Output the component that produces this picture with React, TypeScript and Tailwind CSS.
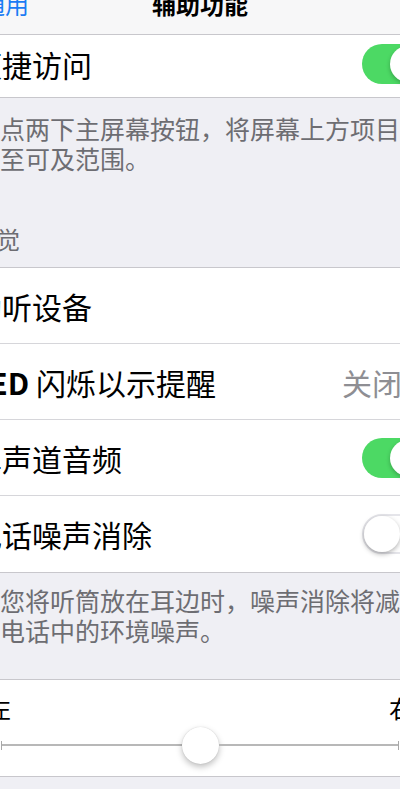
import React from "react";

function Toggle({ on }: { on: boolean }) {
  return on ? (
    <div className="flex h-[40px] w-[66px] shrink-0 items-center justify-end rounded-full bg-[#4cd964] p-[2px]">
      <div className="h-[36px] w-[36px] rounded-full bg-white shadow-[0_2px_4px_rgba(0,0,0,0.25)]" />
    </div>
  ) : (
    <div className="flex h-[40px] w-[66px] shrink-0 items-center justify-start rounded-full border-[2px] border-[#e5e5ea] bg-white">
      <div className="h-[36px] w-[36px] rounded-full bg-white shadow-[0_2px_5px_rgba(0,0,0,0.3)]" />
    </div>
  );
}

function Chevron() {
  return (
    <svg width="13" height="22" viewBox="0 0 13 22" className="shrink-0">
      <path d="M2 2 L11 11 L2 20" fill="none" stroke="#c7c7cc" strokeWidth="2.5" strokeLinecap="round" strokeLinejoin="round" />
    </svg>
  );
}

function Row({ children, right, last }: { children: React.ReactNode; right?: React.ReactNode; last?: boolean }) {
  return (
    <div className={"flex h-[76px] items-center justify-between px-[26px] bg-white " + (last ? "" : "border-b border-[#d6d6da]")}>
      <div className="text-[30px] leading-[36px] text-black whitespace-nowrap">{children}</div>
      {right}
    </div>
  );
}

export default function App() {
  return (
    <div className="h-[789px] w-[400px] overflow-hidden bg-[#efeff4] font-['Noto_Sans_CJK_SC','Noto_Sans',sans-serif]">
      <div className="ml-[-54px] w-[508px]">
        {/* Nav bar */}
        <div className="relative flex h-[35px] items-end border-b border-[#c8c7cc] bg-[#f7f7f8] pb-[18px]">
          <div className="flex items-center pl-[8px] text-[24px] leading-[24px] text-[#1b7cf4] whitespace-nowrap">
            <svg width="13" height="22" viewBox="0 0 13 22" className="shrink-0">
              <path d="M11 2 L2 11 L11 20" fill="none" stroke="#1b7cf4" strokeWidth="3" strokeLinecap="round" strokeLinejoin="round" />
            </svg>
            <span className="ml-[14px]">通用</span>
          </div>
          <div className="flex-1" />
          <div className="absolute bottom-[18px] left-0 right-0 text-center text-[24px] leading-[24px] font-bold text-black">
            辅助功能
          </div>
        </div>

        {/* Reachability row */}
        <div className="flex h-[63px] items-center justify-between border-b border-[#c8c7cc] bg-white px-[26px] pb-[4px]">
          <div className="text-[30px] leading-[36px] text-black whitespace-nowrap">便捷访问</div>
          <Toggle on />
        </div>

        {/* Footer 1 */}
        <div className="pl-[29px] pr-[26px] pt-[15px] text-[25px] leading-[30px] text-[#6d6d72] whitespace-nowrap">
          轻点两下主屏幕按钮，将屏幕上方项目下
          <br />
          移至可及范围。
        </div>

        {/* Header */}
        <div className="px-[26px] pt-[51px] pb-[13px] text-[24px] leading-[30px] text-[#6d6d72] whitespace-nowrap">
          听觉
        </div>

        {/* Hearing group */}
        <div className="border-y border-[#c8c7cc] bg-white">
          <Row right={<Chevron />}>助听设备</Row>
          <Row
            right={
              <div className="flex items-center">
                <span className="text-[30px] leading-[36px] text-[#8e8e93]">关闭</span>
                <span className="ml-[13px] flex items-center"><Chevron /></span>
              </div>
            }
          >
            <span className="font-semibold">LED</span> 闪烁以示提醒
          </Row>
          <Row right={<Toggle on />}>单声道音频</Row>
          <Row right={<Toggle on={false} />} last>电话噪声消除</Row>
        </div>

        {/* Footer 2 */}
        <div className="pl-[29px] pr-[26px] pt-[12px] pb-[34px] text-[25px] leading-[30px] text-[#6d6d72] whitespace-nowrap">
          当您将听筒放在耳边时，噪声消除将减少
          <br />
          少电话中的环境噪声。
        </div>

        {/* Balance slider */}
        <div className="border-y border-[#c8c7cc] bg-white pt-[16px] pb-[12px]">
          <div className="flex justify-between px-[41px] text-[24px] leading-[24px] text-black">
            <span>左</span>
            <span>右</span>
          </div>
          <div className="mt-[6px] flex h-[38px] items-center px-[55px]">
            <div className="h-[9px] w-[1px] bg-[#a8a8a8]" />
            <div className="h-[2px] flex-1 bg-[#b8b8b8]" />
            <div className="h-[37px] w-[37px] shrink-0 rounded-full bg-white shadow-[0_3px_6px_rgba(0,0,0,0.25),0_0_1px_rgba(0,0,0,0.2)]" />
            <div className="h-[2px] flex-1 bg-[#b8b8b8]" />
            <div className="h-[9px] w-[1px] bg-[#a8a8a8]" />
          </div>
        </div>
      </div>
    </div>
  );
}
